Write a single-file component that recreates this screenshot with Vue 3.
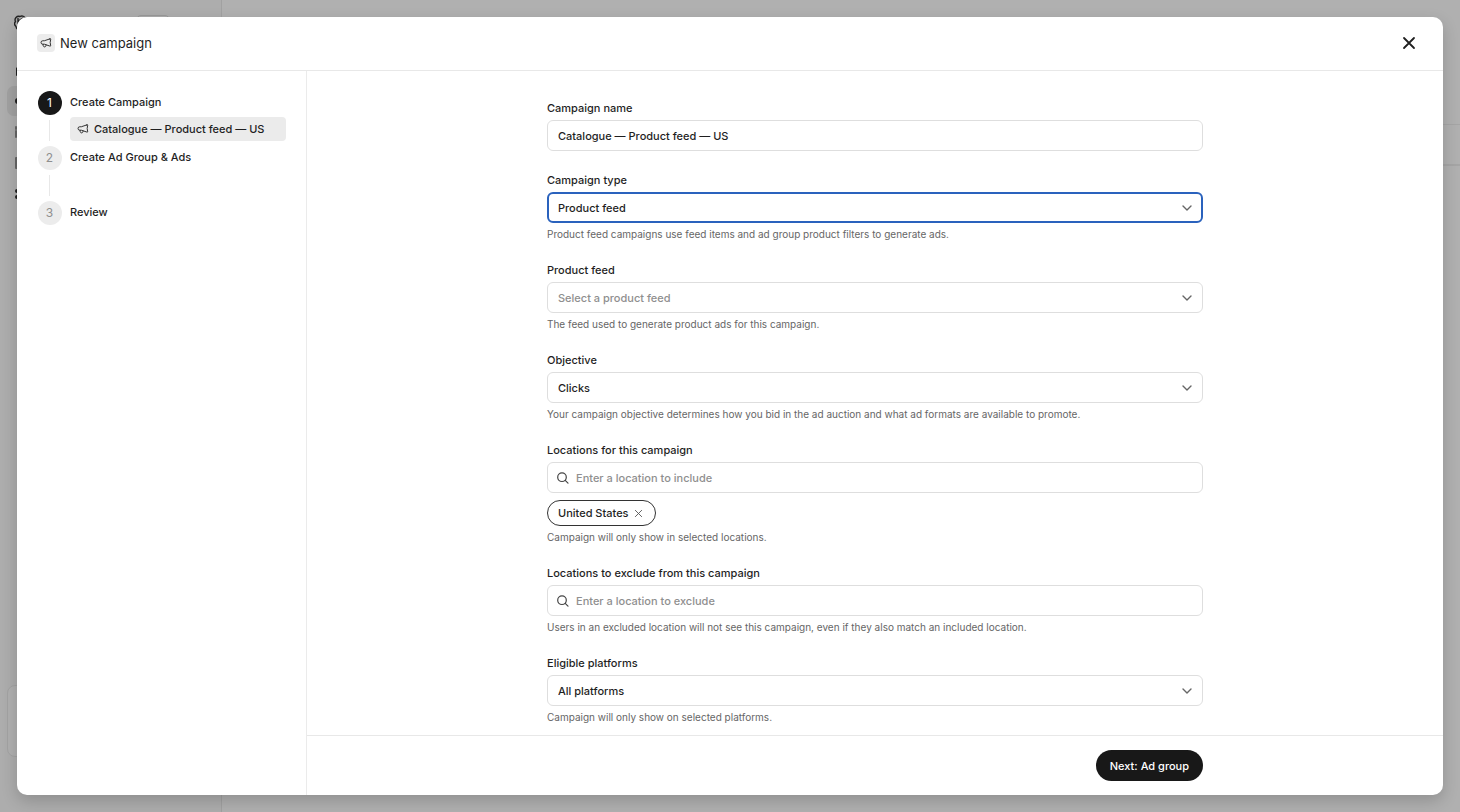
<script setup>
import { ref } from 'vue'

const MEGAPHONE = 'M13.200 2.500 5.800 5H3.700a2.200 2.200 0 0 0 0 4.600h2.100l7.400 2.500c.8.3 1.200-.1 1-.8a13 13 0 0 1 0-8c.2-.7-.2-1.100-1-.8ZM4 9.800c0 2.200.7 3.400 2.100 3.400 1.200 0 2-.9 2-2.500'

const steps = [
  { n: 1, title: 'Create Campaign', active: true, child: 'Catalogue — Product feed — US' },
  { n: 2, title: 'Create Ad Group & Ads' },
  { n: 3, title: 'Review' },
]

const fields = ref([
  { id: 'name', kind: 'text', label: 'Campaign name', value: 'Catalogue — Product feed — US' },
  { id: 'type', kind: 'select', label: 'Campaign type', value: 'Product feed', focused: true, hint: 'Product feed campaigns use feed items and ad group product filters to generate ads.' },
  { id: 'feed', kind: 'select', label: 'Product feed', value: 'Select a product feed', empty: true, hint: 'The feed used to generate product ads for this campaign.' },
  { id: 'objective', kind: 'select', label: 'Objective', value: 'Clicks', hint: 'Your campaign objective determines how you bid in the ad auction and what ad formats are available to promote.' },
  { id: 'include', kind: 'search', label: 'Locations for this campaign', value: '', placeholder: 'Enter a location to include', chips: ['United States'], hint: 'Campaign will only show in selected locations.' },
  { id: 'exclude', kind: 'search', label: 'Locations to exclude from this campaign', value: '', placeholder: 'Enter a location to exclude', hint: 'Users in an excluded location will not see this campaign, even if they also match an included location.' },
  { id: 'platforms', kind: 'select', label: 'Eligible platforms', value: 'All platforms', hint: 'Campaign will only show on selected platforms.' },
])
</script>

<template>
  <div class="screen">
    <div class="shell" aria-hidden="true">
      <div class="shell-side">
        <div class="shell-top">
          <svg class="shell-logo" viewBox="0 0 16 16">
            <path d="M6 1.500a3.600 3.600 0 0 1 5 1.300 3.600 3.600 0 0 1 3 5.200 3.600 3.600 0 0 1-2 5 3.600 3.600 0 0 1-5 1.500 3.600 3.600 0 0 1-5-3 3.600 3.600 0 0 1-.5-5A3.600 3.600 0 0 1 6 1.500ZM5 11V5.500l4-2.300M4 3.500v5l4.500 2.500M8.500 5 13 7.500v4" />
          </svg>
          <span class="shell-tag"></span>
        </div>
        <div class="shell-nav">
          <div class="shell-item"><svg viewBox="0 0 14 14"><path d="M2 12V5.500L7 1l6 4.500V12Z" /></svg></div>
          <div class="shell-item current"><svg viewBox="0 0 14 14"><circle cx="3" cy="7" r="2" /><path d="M5 7h8" /></svg></div>
          <div class="shell-item soft"><svg viewBox="0 0 14 14"><path d="M1 6v6M1 2v2M6 3v9M11 5v7" /></svg></div>
          <div class="shell-item soft"><svg viewBox="0 0 14 14"><path d="M1 2h11v10H1Z" /></svg></div>
          <div class="shell-item"><svg viewBox="0 0 14 14"><circle cx="2" cy="4" r="1" /><circle cx="2" cy="10" r="1" /><path d="M5 4h8M5 10h8" /></svg></div>
        </div>
        <div class="shell-card"></div>
      </div>
      <div class="shell-main"><div class="shell-band"></div></div>
    </div>

    <section class="modal" role="dialog" aria-modal="true" aria-labelledby="dialog-title">
      <header class="head">
        <span class="head-icon"><svg class="mega" viewBox="0 0 16 16"><path :d="MEGAPHONE" /></svg></span>
        <h1 id="dialog-title">New campaign</h1>
        <button class="close" type="button" aria-label="Close">
          <svg viewBox="0 0 14 14"><path d="M2 2l10 10M12 2 2 12" /></svg>
        </button>
      </header>

      <div class="body">
        <nav class="side" aria-label="Steps">
          <ol class="steps">
            <li v-for="s in steps" :key="s.n" class="step" :class="{ active: s.active }">
              <div class="rail">
                <span class="num">{{ s.n }}</span>
                <span v-if="s.n < steps.length" class="line"></span>
              </div>
              <div class="step-text">
                <a class="step-title" href="#">{{ s.title }}</a>
                <a v-if="s.child" class="child" href="#">
                  <svg class="mega" viewBox="0 0 16 16"><path :d="MEGAPHONE" /></svg>{{ s.child }}
                </a>
              </div>
            </li>
          </ol>
        </nav>

        <main class="main">
          <div class="scroll">
            <form class="form" @submit.prevent>
              <div v-for="f in fields" :key="f.id" class="field">
                <label :for="f.id">{{ f.label }}</label>
                <div class="control" :class="{ focused: f.focused, search: f.kind === 'search' }">
                  <template v-if="f.kind === 'select'">
                    <select :id="f.id" :class="{ empty: f.empty }"><option>{{ f.value }}</option></select>
                    <svg class="chevron" viewBox="0 0 12 12"><path d="M2 4l4 4 4-4" /></svg>
                  </template>
                  <template v-else>
                    <svg v-if="f.kind === 'search'" class="glass" viewBox="0 0 14 14"><circle cx="6" cy="6.200" r="4.300" /><path d="M9.200 9.400 12 12.200" /></svg>
                    <input :id="f.id" v-model="f.value" type="text" :placeholder="f.placeholder" autocomplete="off">
                  </template>
                </div>
                <div v-if="f.chips" class="chips">
                  <button v-for="c in f.chips" :key="c" class="chip" type="button" :aria-label="'Remove ' + c">
                    {{ c }}
                    <svg viewBox="0 0 10 10"><path d="M1.500 1.500l7 7M8.500 1.500l-7 7" /></svg>
                  </button>
                </div>
                <p v-if="f.hint" class="hint">{{ f.hint }}</p>
              </div>
            </form>
          </div>
          <footer class="foot">
            <div class="foot-inner"><button class="next" type="button">Next: Ad group</button></div>
          </footer>
        </main>
      </div>
    </section>
  </div>
</template>

<style>
body { margin: 0; }
</style>

<style scoped>
* { box-sizing: border-box; }
.screen {
  height: 100vh;
  overflow: hidden;
  position: relative;
  background: #b0b0b0;
  color: #1f1f1f;
  font-family: Inter, "Liberation Sans", sans-serif;
  font-size: 11px;
  font-weight: 500;
  line-height: 16px;
}
svg { display: block; flex: none; fill: none; stroke: currentColor; stroke-linecap: round; stroke-linejoin: round; }
button, input, select { font: inherit; color: inherit; margin: 0; }
a { color: inherit; text-decoration: none; }

.shell { display: flex; height: 100%; }
.shell-side { width: 222px; flex: none; display: flex; flex-direction: column; background: #adadad; border-right: 1px solid #a1a1a1; padding: 15px 7px 55px; }
.shell-top { display: flex; justify-content: space-between; padding: 0 44px 0 7px; height: 40px; }
.shell-logo { width: 16px; height: 16px; color: #222; stroke-width: 1.400; }
.shell-tag { width: 34px; height: 16px; border: 1px solid #999; border-radius: 5px; }
.shell-nav { display: flex; flex-direction: column; gap: 1px; }
.shell-item { height: 30px; border-radius: 7px; display: flex; align-items: center; padding-left: 8px; }
.shell-item svg { width: 14px; height: 14px; stroke-width: 2; }
.shell-item.current { background: #a1a1a1; }
.shell-item.soft { color: #666; }
.shell-card { height: 72px; margin-top: auto; border: 1px solid #a3a3a3; border-radius: 8px; background: #b0b0b0; }
.shell-main { flex: 1; padding-top: 124px; }
.shell-band { height: 42px; border: solid #a5a5a5; border-width: 1px 0 2px; }

.modal {
  position: absolute;
  inset: 17px;
  display: flex;
  flex-direction: column;
  background: #fff;
  border-radius: 10px;
  overflow: hidden;
  box-shadow: 0 6px 16px rgba(0, 0, 0, .18);
}
.head { display: flex; align-items: center; height: 54px; flex: none; padding: 0 24px 1px 20px; border-bottom: 1px solid #e8e8e8; }
.head-icon { width: 18px; height: 18px; display: grid; place-items: center; border-radius: 4px; background: #ececec; margin-right: 5px; }
.mega { width: 12px; height: 12px; stroke-width: 1.200; }
h1 { margin: 0; font-size: 13px; line-height: 20px; font-weight: 400; }
.close { margin-left: auto; width: 20px; height: 20px; padding: 0; border: 0; background: none; display: grid; place-items: center; }
.close svg { width: 14px; height: 14px; stroke-width: 1.800; }

.body { flex: 1; display: flex; min-height: 0; }
.side { width: 290px; flex: none; border-right: 1px solid #ebebeb; padding: 20px 20px 0; }
.steps { list-style: none; margin: 0; padding: 0; }
.step { display: flex; gap: 8px; min-height: 55px; }
.rail { width: 25px; display: flex; flex-direction: column; align-items: center; gap: 5px; padding-bottom: 5px; }
.num { width: 24px; height: 24px; flex: none; border-radius: 50%; background: #ececec; color: #8f8f8f; display: grid; place-items: center; font-size: 12px; font-weight: 400; }
.active .num { background: #181818; color: #fff; }
.line { flex: 1; width: 1px; background: #e8e8e8; }
.step-text { flex: 1; display: flex; flex-direction: column; gap: 7px; padding-top: 3px; }
.child { display: flex; align-items: center; gap: 5px; height: 24px; padding: 0 7px; border-radius: 4px; background: #ebebeb; white-space: nowrap; }

.main { flex: 1; min-width: 0; display: flex; flex-direction: column; }
.scroll { flex: 1; min-height: 0; overflow: hidden; padding: 29px 24px 0; }
.form { max-width: 656px; margin: 0 auto; display: flex; flex-direction: column; gap: 21px; }
.field { display: flex; flex-direction: column; }
label { align-self: flex-start; margin-bottom: 4px; }
.control { position: relative; height: 31px; display: flex; align-items: center; border: 1px solid #dedede; border-radius: 6px; background: #fff; }
.control.focused { border: 2px solid #2a62bd; }
.control input, .control select { flex: 1; min-width: 0; height: 100%; padding: 0 10px; border: 0; outline: 0; background: none; appearance: none; text-overflow: ellipsis; }
.control.focused select { padding: 0 9px; }
.control select.empty, .control input::placeholder { color: #8f8f8f; opacity: 1; }
.control.search { padding-left: 8px; }
.control.search input { padding-left: 6px; }
.glass { width: 14px; height: 14px; stroke-width: 1.200; color: #444; }
.chevron { position: absolute; right: 9px; width: 12px; height: 12px; stroke-width: 1.400; color: #666; pointer-events: none; }
.focused .chevron { right: 8px; }
.chips { display: flex; gap: 6px; margin-top: 7px; }
.chip { display: flex; align-items: center; gap: 5px; height: 26px; padding: 0 12px 0 10px; border: 1px solid #333; border-radius: 13px; background: #fff; }
.chip svg { width: 9px; height: 9px; color: #555; }
.hint { margin: 4px 0 0; font-size: 10px; line-height: 14px; font-weight: 400; color: #666; }

.foot { flex: none; height: 60px; border-top: 1px solid #e8e8e8; padding: 0 24px; display: flex; align-items: center; justify-content: center; }
.foot-inner { width: 656px; display: flex; justify-content: flex-end; }
.next { height: 31px; padding: 0 14px; border: 0; border-radius: 16px; background: #181818; color: #fff; }
</style>
